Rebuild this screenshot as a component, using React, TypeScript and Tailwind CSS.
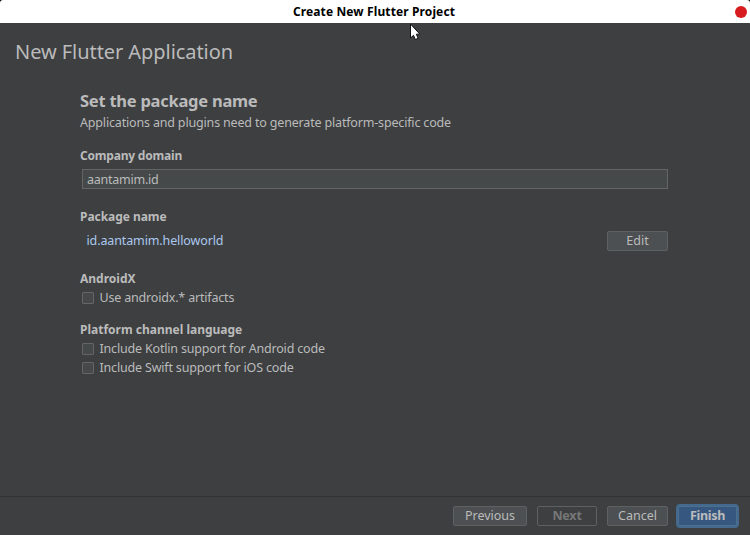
import type { ReactNode } from "react";

function Caption({ children, className }: { children: ReactNode; className: string }) {
  return <h3 className={`h-5 self-start whitespace-nowrap text-[12px] leading-5 font-bold ${className}`}>{children}</h3>;
}

function Check({ label }: { label: string }) {
  return (
    <div className="flex h-[19px] items-center gap-[5.5px] pl-0.5">
      <span className="h-3 w-3 shrink-0 rounded-[1px] border border-[#636566] bg-[#45494a]" />
      <span className="whitespace-nowrap text-[12.5px] leading-[19px] tracking-[-0.18px]">{label}</span>
    </div>
  );
}

function Button({ children, className }: { children: ReactNode; className: string }) {
  return (
    <button
      className={`flex h-5 shrink-0 items-center justify-center rounded-[2px] border text-[12.5px] leading-none ${className}`}
    >
      {children}
    </button>
  );
}

export default function App() {
  return (
    <div className="relative flex h-[535px] w-[750px] flex-col overflow-hidden bg-[#3d3f41] font-['Noto_Sans','Open_Sans',sans-serif] text-[12.5px] text-[#bbbbbb]">
      <div className="bg-black">
        <header className="flex h-[23px] items-center rounded-t-[3px] bg-white pr-[3px] text-black">
          <span className="w-[13px] shrink-0" />
          <h1 className="flex-1 text-center text-[12px] leading-[23px] font-bold tracking-[0.12px]">
            Create New Flutter Project
          </h1>
          <span className="h-3 w-3 shrink-0 rounded-full bg-[#d81b1e]" />
        </header>
      </div>

      <div className="flex h-[58px] items-center pl-[15px]">
        <h2 className="whitespace-nowrap text-[20px] leading-[58px] tracking-[-0.06px]">New Flutter Application</h2>
      </div>

      <main className="flex h-[415px] flex-col pr-[82px] pl-20">
        <h2 className="mt-2 h-6 self-start whitespace-nowrap text-[16.5px] leading-6 font-bold tracking-[-0.25px]">
          Set the package name
        </h2>
        <p className="h-5 self-start whitespace-nowrap leading-5 tracking-[-0.17px]">
          Applications and plugins need to generate platform-specific code
        </p>
        <Caption className="mt-[13px] tracking-[-0.2px]">Company domain</Caption>
        <div className="mt-[3px] ml-0.5 flex h-5 items-center border border-[#646666] bg-[#45494a] pl-1">
          <span className="pt-0.5 leading-none tracking-[-0.25px]">aantamim.id</span>
        </div>
        <Caption className="mt-[18px] tracking-[-0.05px]">Package name</Caption>
        <div className="mt-1 flex h-5 items-center justify-between pl-[6.5px]">
          <span className="leading-5 tracking-[-0.12px] text-[#abc8ee]">id.aantamim.helloworld</span>
          <Button className="w-[61px] border-[#5e6162] bg-[#4c5052]">Edit</Button>
        </div>
        <Caption className="mt-[18px] -mb-px">AndroidX</Caption>
        <Check label="Use androidx.* artifacts" />
        <Caption className="mt-[13px] -mb-px">Platform channel language</Caption>
        <Check label="Include Kotlin support for Android code" />
        <Check label="Include Swift support for iOS code" />
      </main>

      <footer className="flex flex-1 items-center justify-end border-t border-[#303233] pr-[13px]">
        <Button className="mr-[10px] w-[74px] border-[#5e6162] bg-[#4c5052]">Previous</Button>
        <Button className="mr-[10px] w-[60px] border-[#5e6162] font-bold tracking-[-0.2px] text-[#777777]">Next</Button>
        <Button className="mr-[10px] w-[61px] border-[#5e6162] bg-[#4c5052]">Cancel</Button>
        <Button className="w-[59px] border-[#4c708c] bg-[#365880] font-bold tracking-[-0.3px] ring-2 ring-[#43698e]">
          Finish
        </Button>
      </footer>

      <svg className="absolute top-[23px] left-[409px]" width="14" height="19" viewBox="0 0 14 19">
        <path d="M1.5 1v14l3-2.7 1.9 4.2 2.8-1.2-1.9-4.1h3.6z" fill="#fff" stroke="#111" strokeWidth="1" />
      </svg>
    </div>
  );
}
